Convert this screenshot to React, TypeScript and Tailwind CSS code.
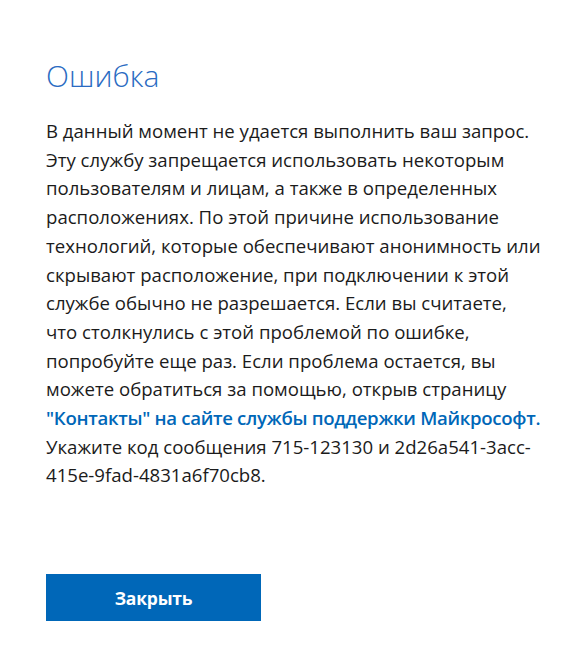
import React from "react";

const lines = [
  "В данный момент не удается выполнить ваш запрос.",
  "Эту службу запрещается использовать некоторым",
  "пользователям и лицам, а также в определенных",
  "расположениях. По этой причине использование",
  "технологий, которые обеспечивают анонимность или",
  "скрывают расположение, при подключении к этой",
  "службе обычно не разрешается. Если вы считаете,",
  "что столкнулись с этой проблемой по ошибке,",
  "попробуйте еще раз. Если проблема остается, вы",
  "можете обратиться за помощью, открыв страницу",
];

const App = () => {
  return (
    <div
      className="min-h-screen w-full bg-white text-[#1b1b1b]"
      style={{ fontFamily: '"Open Sans", "Noto Sans", sans-serif' }}
    >
      <div className="px-[46px] pt-[56px]">
        <h1 className="text-[30px] leading-[40px] font-light text-[#2a6bc2]">Ошибка</h1>

        <p className="mt-[21px] w-[510px] text-[18.6px] leading-[28.7px]">
          {lines.map((l) => (
            <span key={l} className="block whitespace-nowrap">
              {l}
            </span>
          ))}
          <a
            href="#"
            className="block whitespace-nowrap font-semibold tracking-[-0.3px] text-[#0067b8]"
          >
            "Контакты" на сайте службы поддержки Майкрософт.
          </a>
          <span className="block whitespace-nowrap">
            Укажите код сообщения 715-123130 и 2d26a541-3acc-
          </span>
          <span className="block whitespace-nowrap">415e-9fad-4831a6f70cb8.</span>
        </p>

        <button className="mt-[84px] h-[47px] w-[215px] bg-[#0067b8] text-[17.5px] font-bold tracking-[-0.2px] text-white">
          Закрыть
        </button>
      </div>
    </div>
  );
};

export default App;
